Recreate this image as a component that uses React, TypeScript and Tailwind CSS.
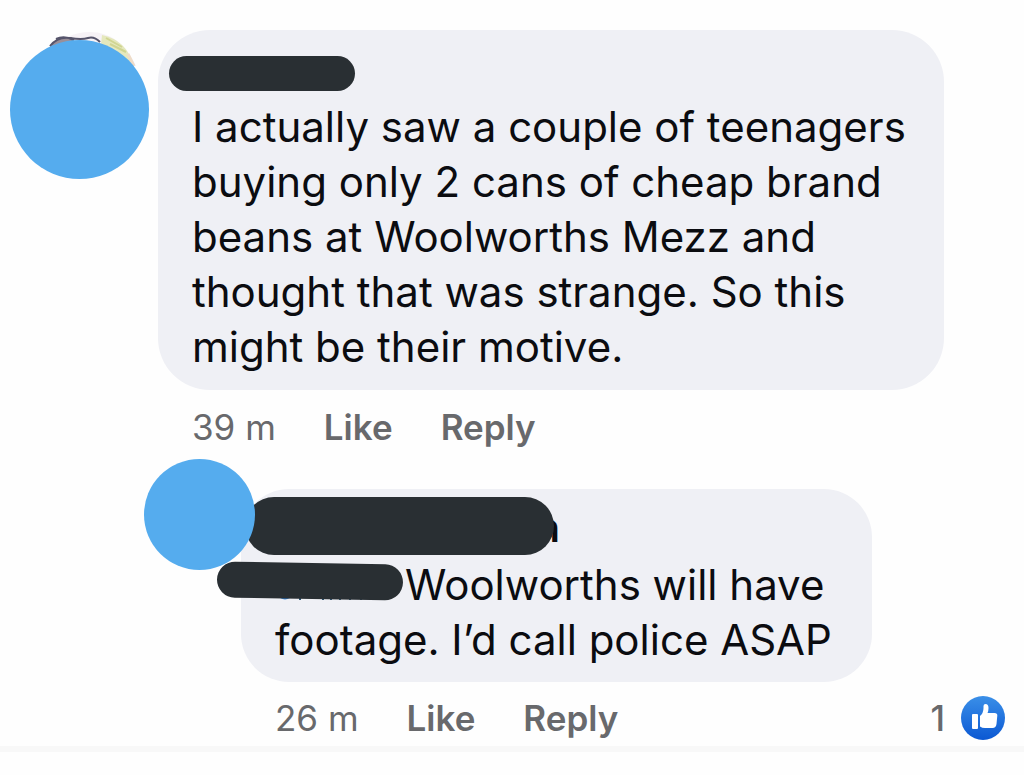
import React from 'react';

function Actions({ time }: { time: string }) {
  return (
    <div className="flex items-center gap-12 text-[35px] leading-[44px] text-[#68696c]">
      <span>{time}</span>
      <button type="button" className="font-semibold">Like</button>
      <button type="button" className="font-semibold">Reply</button>
    </div>
  );
}

// Sliver of the profile photo that shows above the blue cover
function PhotoEdge() {
  return (
    <svg viewBox="0 0 110 40" className="absolute -top-[10px] left-[26px] h-[40px] w-[110px]" fill="none" aria-hidden="true">
      <path d="M12 22 Q30 2 54 2 Q84 2 100 36 L12 36Z" fill="#f6f2f6" />
      <path d="M66 5 Q90 10 97 34 L64 24Z" fill="#e5e8bd" />
      <path d="M70 8 L86 17 M74 14 L90 22" stroke="#d0d592" strokeWidth="2" />
      <path d="M92 24 L98 36" stroke="#eedcc8" strokeWidth="3" />
      <path d="M14 16 Q20 6 36 7 L38 14 L14 20Z" fill="#9a8f98" />
      <path d="M14 16 Q22 6 34 8 T52 8 T64 12 M20 9 Q28 5 38 10" stroke="#55546b" strokeWidth="2" />
    </svg>
  );
}

function LikeBadge() {
  return (
    <svg viewBox="0 0 44 44" className="h-[44px] w-[44px]" role="img" aria-label="Like">
      <defs>
        <linearGradient id="like" x1="0" y1="0" x2="0" y2="1">
          <stop offset="0" stopColor="#3a8fe8" />
          <stop offset="1" stopColor="#0b58d3" />
        </linearGradient>
      </defs>
      <circle cx="22" cy="22" r="22" fill="url(#like)" />
      <rect x="11" y="18" width="6" height="15" rx="1" fill="#fff" />
      <path
        d="M19 20 Q22.500 17 22.500 12 V10 Q22.500 8 24.500 8 Q27.500 8 27.500 12 Q27.500 15 26.500 17 H33.500 Q36.500 17 36.300 19.500 L35.500 28 Q35 32 31.500 32 H24 Q21 32 19 30.500Z"
        fill="#fff"
      />
    </svg>
  );
}

export default function App() {
  return (
    <main className="min-h-screen bg-[#fefefe] pt-[30px] font-['Inter','Liberation_Sans',sans-serif] text-[#0b0c10]">
      <article className="flex items-start gap-[9px] pl-[10px]">
        <div className="relative mt-[10px] shrink-0">
          <PhotoEdge />
          <div className="relative h-[139px] w-[139px] rounded-full bg-[#55acee]" />
        </div>
        <div>
          <div className="w-fit rounded-[52px] bg-[#eff0f5] pt-[26px] pr-[38px] pb-[16px] pl-[34px]">
            <div className="-ml-[23px] h-[35px] w-[186px] rounded-full bg-[#292f33]" />
            <p className="mt-[8px] text-[42px] leading-[55px] whitespace-pre-line">
              {`I actually saw a couple of teenagers
              buying only 2 cans of cheap brand
              beans at Woolworths Mezz and
              thought that was strange. So this
              might be their motive.`}
            </p>
          </div>
          <div className="mt-[15px] pl-[34px]">
            <Actions time="39 m" />
          </div>
        </div>
      </article>

      <article className="mt-[10px] flex items-start pl-[144px]">
        <div className="z-10 h-[111px] w-[111px] shrink-0 rounded-full bg-[#55acee]" />
        <div className="-ml-[14px] min-w-0 flex-1 pt-[30px]">
          <div className="w-fit rounded-[48px] bg-[#eff0f5] pt-[8px] pr-[40px] pb-[15px] pl-[34px]">
            <div className="relative -ml-[30px] w-[309px]">
              <span className="absolute top-[6px] -right-[6px] text-[40px] leading-[50px] font-semibold">n</span>
              <div className="relative h-[58px] rounded-full bg-[#292f33]" />
            </div>
            <div className="mt-[2px] text-[42px] leading-[55px]">
              <div className="-ml-[58px] flex items-start">
                <div className="relative mt-[6px] mr-[2px]">
                  <svg viewBox="0 0 110 8" className="absolute -bottom-[2px] left-[58px] h-[8px] w-[110px]" aria-hidden="true">
                    <path d="M0 0 H20 Q10 13 0 0Z" fill="#2f83dc" />
                    <path d="M25 0 V7 M48 0 V7 M56 0 V7 M65 0 V7 M75 0 V7 M86 0 V7" stroke="#2d5878" strokeWidth="2" />
                  </svg>
                  <div className="relative h-[36px] w-[186px] rotate-[1deg] rounded-full bg-[#292f33]" />
                </div>
                <span>Woolworths will have</span>
              </div>
              <p>footage. I’d call police ASAP</p>
            </div>
          </div>
          <div className="mt-[14px] flex items-start justify-between pr-[19px] pl-[34px]">
            <Actions time="26 m" />
            <div className="flex items-start gap-4 text-[35px] leading-[44px] font-medium text-[#68696c]">
              <span>1</span>
              <LikeBadge />
            </div>
          </div>
        </div>
      </article>
      <hr className="mt-[6px] h-[6px] border-0 bg-[#f8f8f8]" />
    </main>
  );
}
